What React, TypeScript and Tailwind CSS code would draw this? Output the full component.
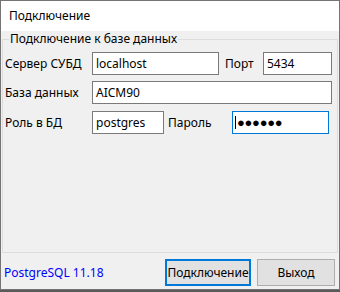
export default function App() {
  return (
    <div className="w-[340px] h-[292px] bg-[#5a5a5a] text-[12px] text-black" style={{ fontFamily: '"Noto Sans", "Liberation Sans", sans-serif' }}>
      <div className="h-[290px] border border-[#747474] flex flex-col">
        <div className="h-[30px] bg-white flex items-center pl-[8px]">Подключение</div>
        <div className="flex-1 bg-[#f0f0f0] flex flex-col">
          <fieldset className="mx-[1px] h-[222px] border border-[#dcdcdc] pl-[1px]">
            <legend className="ml-[5px] px-[1px] leading-[16px]">Подключение к базе данных</legend>
            <div className="mt-[5px] flex items-center h-[23px]">
              <div className="w-[88px] pl-[1px]">Сервер СУБД</div>
              <div className="w-[127px] h-[23px] border border-[#7a7a7a] bg-white flex items-center pl-[3px]">localhost</div>
              <div className="w-[44px] pl-[6px]">Порт</div>
              <div className="w-[69px] h-[23px] border border-[#7a7a7a] bg-white flex items-center pl-[3px]">5434</div>
            </div>
            <div className="mt-[6px] flex items-center h-[23px]">
              <div className="w-[88px] pl-[1px]">База данных</div>
              <div className="w-[240px] h-[23px] border border-[#7a7a7a] bg-white flex items-center pl-[3px]">AICM90</div>
            </div>
            <div className="mt-[7px] flex items-center h-[23px]">
              <div className="w-[88px] pl-[1px]">Роль в БД</div>
              <div className="w-[72px] h-[23px] border border-[#7a7a7a] bg-white flex items-center pl-[3px]">postgres</div>
              <div className="w-[68px] pl-[4px]">Пароль</div>
              <div className="w-[97px] h-[23px] border border-[#0078d7] bg-white flex items-center pl-[2px]">
                <span className="w-[1px] h-[13px] bg-black"></span>
                <span className="ml-[1px] text-[13px] leading-none tracking-[-0.3px]">●●●●●●</span>
              </div>
            </div>
          </fieldset>
          <div className="mt-[6px] flex items-center pl-[3px] pr-[4px]">
            <div className="flex-1 text-[#0000ff]">PostgreSQL 11.18</div>
            <div className="w-[86px] h-[27px] border-2 border-[#0078d7] bg-[#e1e1e1] flex items-center justify-center">Подключение</div>
            <div className="ml-[6px] w-[78px] h-[27px] border border-[#adadad] bg-[#e1e1e1] flex items-center justify-center">Выход</div>
          </div>
        </div>
      </div>
    </div>
  );
}
